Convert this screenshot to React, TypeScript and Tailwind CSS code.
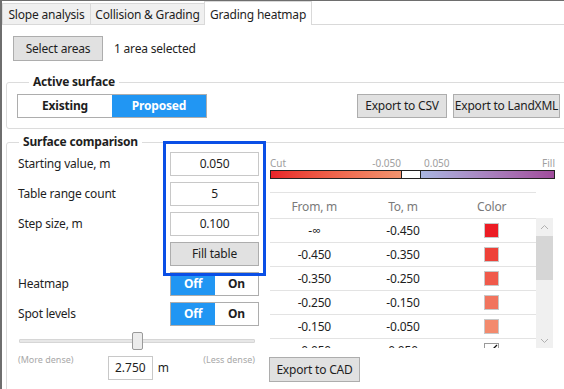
import React from "react";

const rows = [
  { from: "-∞", to: "-0.450", color: "bg-[#ec1c24]" },
  { from: "-0.450", to: "-0.350", color: "bg-[#ee4138]" },
  { from: "-0.350", to: "-0.250", color: "bg-[#f05a4b]" },
  { from: "-0.250", to: "-0.150", color: "bg-[#f1745e]" },
  { from: "-0.150", to: "-0.050", color: "bg-[#f38a6d]" },
  { from: "-0.050", to: "0.050", color: "none" },
];

function Toggle() {
  return (
    <div className="flex h-[24px] w-[89px] border border-[#adadad] font-bold">
      <div className="flex w-[44px] items-center justify-center bg-[#2196f3] text-white">Off</div>
      <div className="flex flex-1 items-center justify-center bg-white">On</div>
    </div>
  );
}

export default function App() {
  return (
    <div className="relative flex h-[389px] w-[564px] flex-col overflow-hidden border-l-2 border-t border-[#6e6e6e] bg-white font-['Noto_Sans','Open_Sans',sans-serif] text-[12px] leading-[16px] tracking-[-0.2px] text-[#1e1e1e]">
      {/* tab bar */}
      <div className="flex h-[24px] items-end whitespace-nowrap">
        <div className="flex h-[22px] w-[88px] items-center justify-center border-l border-t border-b border-[#d9d9d9] bg-[#f0f0f0] pt-[2px]">
          Slope analysis
        </div>
        <div className="flex h-[22px] w-[114px] items-center justify-center border-l border-t border-b border-[#d9d9d9] bg-[#f0f0f0] pt-[2px]">
          Collision &amp; Grading
        </div>
        <div className="flex h-[24px] w-[108px] items-center justify-center border-x border-t border-[#d9d9d9] bg-white pt-[3px]">
          Grading heatmap
        </div>
        <div className="h-full flex-1 border-b border-[#d9d9d9]" />
      </div>

      {/* content */}
      <div className="flex flex-col whitespace-nowrap pl-[4px]">
        <div className="mt-[11px] flex items-center pl-[7px]">
          <div className="flex h-[25px] w-[90px] items-center justify-center border border-[#adadad] bg-[#e1e1e1]">
            Select areas
          </div>
          <span className="ml-[11px]">1 area selected</span>
        </div>

        <fieldset className="mt-[13px] mr-[-20px] rounded-[3px] border border-[#dcdcdc] pb-[10px] pl-[10px]">
          <legend className="ml-[12px] px-[4px] font-bold">Active surface</legend>
          <div className="mt-[4px] flex items-center">
            <div className="flex h-[24px] border border-[#adadad] font-bold">
              <div className="flex w-[94px] items-center justify-center bg-white">Existing</div>
              <div className="flex w-[94px] items-center justify-center bg-[#2196f3] text-white">Proposed</div>
            </div>
            <div className="ml-[150px] flex gap-[6px]">
              <div className="flex h-[24px] w-[90px] items-center justify-center border border-[#adadad] bg-[#e1e1e1]">
                Export to CSV
              </div>
              <div className="flex h-[24px] w-[107px] items-center justify-center border border-[#adadad] bg-[#e1e1e1]">
                Export to LandXML
              </div>
            </div>
          </div>
        </fieldset>

        <fieldset className="mt-[5px] mr-[-20px] h-[300px] rounded-[3px] border border-[#dcdcdc]">
          <legend className="ml-[12px] px-[4px] font-bold">Surface comparison</legend>
          <div className="flex">
            {/* left column */}
            <div className="flex w-[263px] flex-col pl-[11px] pt-[2px]">
              <div className="flex flex-col gap-[6px]">
                {[
                  ["Starting value, m", "0.050"],
                  ["Table range count", "5"],
                  ["Step size, m", "0.100"],
                ].map(([l, v]) => (
                  <div key={l} className="flex h-[24px] items-center">
                    <span className="w-[152px]">{l}</span>
                    <div className="flex h-[24px] w-[89px] items-center justify-center border border-[#c8c8c8] bg-white">
                      {v}
                    </div>
                  </div>
                ))}
                <div className="flex h-[24px] items-center">
                  <span className="w-[152px]" />
                  <div className="flex h-[24px] w-[89px] items-center justify-center border border-[#adadad] bg-[#e1e1e1]">
                    Fill table
                  </div>
                </div>
                <div className="flex h-[24px] items-center">
                  <span className="w-[152px]">Heatmap</span>
                  <Toggle />
                </div>
                <div className="flex h-[24px] items-center">
                  <span className="w-[152px]">Spot levels</span>
                  <Toggle />
                </div>
              </div>

              {/* slider */}
              <div className="mt-[6px] flex h-[18px] w-[237px] items-center pl-[1px]">
                <div className="flex h-[4px] w-full items-center rounded-[1px] border border-[#d6d6d6] bg-[#e7e7e7]">
                  <div className="w-[112px]" />
                  <div className="h-[18px] w-[11px] rounded-[2px] border border-[#9a9a9a] bg-[#ececec]" />
                </div>
              </div>
              <div className="mt-[4px] flex w-[237px] items-start justify-between text-[9px] leading-[12px] tracking-normal text-[#a8a8a8]">
                <span>(More dense)</span>
                <div className="mt-[2px] flex items-center text-[12px] text-[#1e1e1e]">
                  <div className="flex h-[24px] w-[45px] items-center justify-center border border-[#c8c8c8]">2.750</div>
                  <span className="ml-[5px]">m</span>
                </div>
                <span>(Less dense)</span>
              </div>
            </div>

            {/* right column */}
            <div className="flex w-[285px] flex-col">
              <div className="mt-[7px] flex h-[13px] text-[10px] leading-[13px] tracking-normal text-[#a0a0a0]">
                <div className="flex w-[132px] justify-between pr-[1px]">
                  <span>Cut</span>
                  <span>-0.050</span>
                </div>
                <div className="w-[19px]" />
                <div className="flex flex-1 justify-between pl-[3px]">
                  <span>0.050</span>
                  <span>Fill</span>
                </div>
              </div>
              <div className="flex h-[9px] border border-[#222]">
                <div className="w-[131px] border-r border-[#222] bg-gradient-to-r from-[#e82229] to-[#f2936e]" />
                <div className="w-[19px] border-r border-[#222] bg-white" />
                <div className="flex-1 bg-gradient-to-r from-[#a9b6e2] to-[#a04c9c]" />
              </div>

              <div className="mt-[13px] w-[266px] border-t border-[#e3e3e3]">
                <div className="grid h-[25px] grid-cols-3 items-end pb-[3px] text-[#7a7a7a]">
                  <span className="text-center">From, m</span>
                  <span className="text-center">To, m</span>
                  <span className="text-center">Color</span>
                </div>
              </div>
              <div className="flex h-[130px]">
                <div className="h-full w-[266px] overflow-hidden">
                  {rows.map((r, i) => (
                    <div
                      key={i}
                      className="grid h-[24px] grid-cols-3 items-center border-t border-[#e3e3e3]"
                    >
                      <span className="text-center">{r.from}</span>
                      <span className="text-center">{r.to}</span>
                      <div className="flex justify-center">
                        {r.color === "none" ? (
                          <div className="relative h-[15px] w-[15px] overflow-hidden border border-[#9a9a9a] bg-white">
                            <svg width="13" height="13" viewBox="0 0 13 13" className="absolute left-0 top-0">
                              <line x1="12" y1="1" x2="7" y2="6" stroke="#111" strokeWidth="1.3" />
                            </svg>
                          </div>
                        ) : (
                          <div className={`h-[15px] w-[15px] border border-[#c8c8c8] ${r.color}`} />
                        )}
                      </div>
                    </div>
                  ))}
                </div>
                <div className="flex h-full w-[17px] flex-col items-center bg-[#f0f0f0]">
                  <svg width="9" height="6" viewBox="0 0 9 6" className="mt-[6px]">
                    <path d="M1 5 L4.5 1.5 L8 5" fill="none" stroke="#b0b0b0" strokeWidth="1" />
                  </svg>
                  <div className="mt-[6px] h-[44px] w-full bg-[#d6d6d6]" />
                  <div className="flex-1" />
                  <svg width="9" height="6" viewBox="0 0 9 6" className="mb-[4px]">
                    <path d="M1 1 L4.5 4.5 L8 1" fill="none" stroke="#b0b0b0" strokeWidth="1" />
                  </svg>
                </div>
              </div>
              <div className="mt-[9px] ml-[-1px] flex h-[25px] w-[91px] items-center justify-center border border-[#adadad] bg-[#e1e1e1]">
                Export to CAD
              </div>
            </div>
          </div>
        </fieldset>
      </div>

      {/* highlight overlay */}
      <div className="absolute left-[161px] top-[140px] h-[135px] w-[103px] border-[3px] border-[#0a4fe6]" />
    </div>
  );
}
